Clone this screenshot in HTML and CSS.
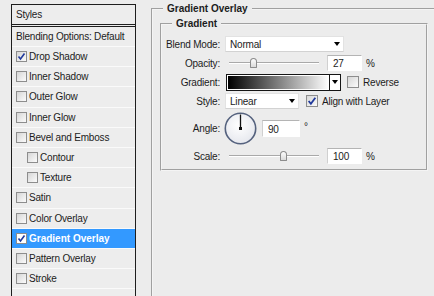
FILE: index.html
```html
<!DOCTYPE html>
<html lang="en">
<head>
    <meta charset="UTF-8">
    <title>Layer Style - Gradient Overlay</title>
    <link rel="stylesheet" href="styles.css">
</head>
<body>
    <div class="dialog">
        <ul class="estilos">
            <li class="cabecera titulo">Styles</li>
            <li class="cabecera">Blending Options: Default</li>
            <li><span class="cb marcado"></span>Drop Shadow</li>
            <li><span class="cb"></span>Inner Shadow</li>
            <li><span class="cb"></span>Outer Glow</li>
            <li><span class="cb"></span>Inner Glow</li>
            <li><span class="cb"></span>Bevel and Emboss</li>
            <li class="sub"><span class="cb"></span>Contour</li>
            <li class="sub"><span class="cb"></span>Texture</li>
            <li><span class="cb"></span>Satin</li>
            <li><span class="cb"></span>Color Overlay</li>
            <li class="activo"><span class="cb marcado"></span>Gradient Overlay</li>
            <li><span class="cb"></span>Pattern Overlay</li>
            <li><span class="cb"></span>Stroke</li>
        </ul>

        <div class="opciones">
            <fieldset class="grupo exterior">
                <legend>Gradient Overlay</legend>
                <fieldset class="grupo interior">
                    <legend>Gradient</legend>

                    <div class="fila">
                        <label>Blend Mode:</label>
                        <div class="select ancho">Normal</div>
                    </div>

                    <div class="fila">
                        <label>Opacity:</label>
                        <div class="slider"><span class="thumb" style="left: 21px"></span></div>
                        <div class="campo">27</div>
                        <span class="unidad">%</span>
                    </div>

                    <div class="fila">
                        <label>Gradient:</label>
                        <div class="degradado">
                            <div class="muestra"></div>
                            <div class="flecha"></div>
                        </div>
                        <span class="cb grande"></span>
                        <span class="texto">Reverse</span>
                    </div>

                    <div class="fila espacio">
                        <label>Style:</label>
                        <div class="select corto">Linear</div>
                        <span class="cb grande marcado alinear"></span>
                        <span class="texto">Align with Layer</span>
                    </div>

                    <div class="fila alta espacio">
                        <label>Angle:</label>
                        <svg class="dial" width="33" height="33" viewBox="0 0 33 33">
                            <defs>
                                <radialGradient id="relleno" cx="0.45" cy="0.4" r="0.6">
                                    <stop offset="0" stop-color="#ffffff"/>
                                    <stop offset="1" stop-color="#e6e8ee"/>
                                </radialGradient>
                            </defs>
                            <circle cx="16.5" cy="16.5" r="15.2" fill="url(#relleno)" stroke="#55627e" stroke-width="1.6"/>
                            <line x1="16.5" y1="2.5" x2="16.5" y2="16.5" stroke="#111" stroke-width="1.3"/>
                            <rect x="15" y="15" width="3" height="3" fill="#111"/>
                        </svg>
                        <div class="campo angulo">90</div>
                        <span class="grado">°</span>
                    </div>

                    <div class="fila">
                        <label>Scale:</label>
                        <div class="slider"><span class="thumb" style="left: 51px"></span></div>
                        <div class="campo">100</div>
                        <span class="unidad">%</span>
                    </div>
                </fieldset>
            </fieldset>
        </div>
    </div>
</body>
</html>
```

FILE: styles.css
```css
/* Cuadro de estilo de capa */
body {
    margin: 0;
    background: #ececec;
    font-family: "Liberation Sans", Arial, sans-serif;
    font-size: 10px;
    letter-spacing: -0.2px;
    color: #1c1c1c;
    overflow: hidden;
    height: 296px;
}
.dialog {
    display: flex;
    align-items: flex-start;
    padding: 4px 0 0 11px;
}

/* Lista de estilos */
.estilos {
    list-style: none;
    margin: 0;
    padding: 0;
    width: 125px;
    height: 292px;
    box-sizing: border-box;
    overflow: hidden;
    border: 1px solid #1e1e1e;
    border-bottom: none;
    background: #ededed;
}
.estilos li {
    display: flex;
    align-items: center;
    height: 19.2px;
    padding-left: 4px;
    border-bottom: 1px solid #fafafa;
}
.estilos li.titulo {
    height: 20px;
    border-bottom: 3px double #1e1e1e;
}
.estilos li.cabecera {
    height: 19px;
}
.estilos li.sub {
    padding-left: 15px;
}
.estilos li.activo {
    background: #3399ff;
    color: #fff;
    font-weight: bold;
    letter-spacing: 0;
}
.cb {
    box-sizing: border-box;
    width: 11px;
    height: 11px;
    margin-right: 2px;
    border: 1px solid #8d8d8d;
    background: linear-gradient(135deg, #d6d6d6, #fbfbfb);
    flex-shrink: 0;
}
.cb.marcado {
    background: url("data:image/svg+xml,%3Csvg xmlns='http://www.w3.org/2000/svg' viewBox='0 0 9 9'%3E%3Cpath d='M1.5 4.5 L3.5 7 L7.5 1.5' fill='none' stroke='%23213a9c' stroke-width='1.6'/%3E%3C/svg%3E") center / 9px 9px no-repeat, linear-gradient(135deg, #d6d6d6, #fbfbfb);
}
.activo .cb.marcado {
    background: url("data:image/svg+xml,%3Csvg xmlns='http://www.w3.org/2000/svg' viewBox='0 0 9 9'%3E%3Cpath d='M1.5 4.5 L3.5 7 L7.5 1.5' fill='none' stroke='%23213a9c' stroke-width='1.6'/%3E%3C/svg%3E") center / 9px 9px no-repeat, #fff;
}

/* Grupos */
.opciones {
    flex: 1;
    margin-left: 15px;
    margin-top: -1px;
}
.grupo {
    margin: 0;
    border: 2px groove #f4f4f4;
    min-width: 0;
}
.grupo legend {
    font-weight: bold;
    letter-spacing: 0;
    line-height: 12px;
    padding: 0 4px;
}
.exterior {
    box-sizing: border-box;
    padding: 3px 0 0 7px;
    height: 293px;
    border-right: none;
    border-bottom: none;
}
.exterior legend {
    margin-left: 3px;
}
.interior {
    width: 264px;
    padding: 6px 0 5px 0;
}
.interior legend {
    margin-left: 10px;
}

/* Filas del formulario */
.fila {
    display: flex;
    align-items: center;
    height: 16px;
    margin-bottom: 3px;
}
.fila.espacio {
    margin-top: 3px;
}
.fila.alta {
    height: 33px;
}
.fila:last-child {
    margin-bottom: 0;
}
.fila label {
    width: 58px;
    text-align: right;
    margin-right: 5px;
    flex-shrink: 0;
}
.select {
    box-sizing: border-box;
    height: 16px;
    display: flex;
    align-items: center;
    justify-content: space-between;
    padding: 0 3px 0 4px;
    background: #fff;
    border: 1px solid #e2e2e2;
    border-bottom-color: #d2d2d2;
}
.select::after {
    content: "";
    border-top: 4px solid #000;
    border-left: 3px solid transparent;
    border-right: 3px solid transparent;
}
.select.ancho {
    width: 119px;
}
.select.corto {
    width: 74px;
}
.slider {
    position: relative;
    width: 90px;
    height: 2px;
    margin: 0 8px 0 4px;
    border-top: 1px solid #a9a9a9;
    border-bottom: 1px solid #fff;
    box-sizing: border-box;
}
.thumb {
    position: absolute;
    top: -5px;
    width: 7px;
    height: 10px;
    box-sizing: border-box;
    border: 1px solid #8c8c8c;
    border-radius: 4px 4px 1px 1px;
    background: linear-gradient(#fdfdfd, #dadada);
}
.campo {
    box-sizing: border-box;
    width: 35px;
    height: 16px;
    padding: 2px 0 0 5px;
    background: #fff;
    border: 1px solid #fff;
    border-top-color: #b4b4b4;
    border-left-color: #d0d0d0;
}
.unidad {
    margin-left: 4px;
}
.degradado {
    display: flex;
    box-sizing: border-box;
    width: 115px;
    height: 17px;
    margin-left: 1px;
    margin-right: 6px;
    border: 1px solid #151515;
    background: #fff;
}
.muestra {
    flex: 1;
    border: 1px solid #fff;
    border-right: none;
    background: linear-gradient(to right, #000, #fff);
}
.flecha {
    width: 10px;
    display: flex;
    align-items: center;
    justify-content: center;
    border-left: 1px solid #151515;
}
.flecha::after {
    content: "";
    border-top: 4px solid #000;
    border-left: 3px solid transparent;
    border-right: 3px solid transparent;
}
.cb.grande {
    width: 12px;
    height: 12px;
    margin-right: 4px;
}
.cb.alinear {
    margin-left: 7px;
}
.cb.grande.marcado {
    background-size: 10px 10px, auto;
}
.dial {
    display: block;
    margin-left: -1px;
}
.angulo {
    width: 38px;
    height: 17px;
    margin-left: 5px;
    padding-top: 3px;
}
.grado {
    align-self: flex-start;
    margin: 9px 0 0 4px;
}
```
